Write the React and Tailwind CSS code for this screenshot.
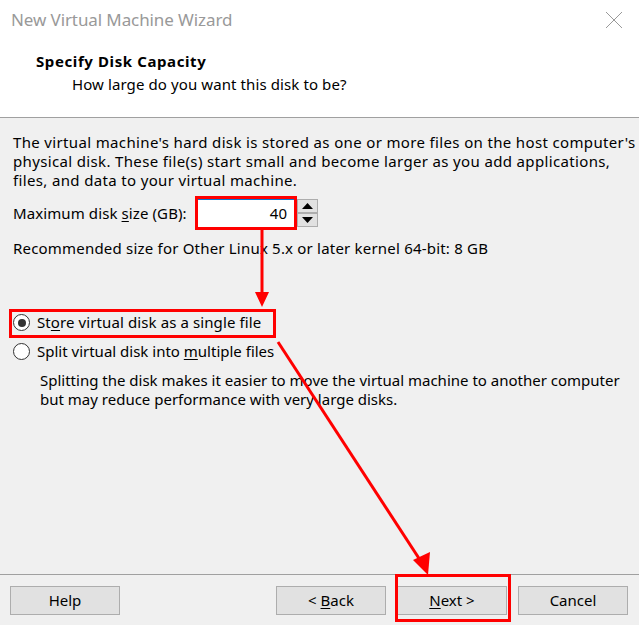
import React from 'react';

const Underline = ({ children }) => <span className="underline underline-offset-2">{children}</span>;

const Radio = ({ checked }) => (
  <span className="w-[17px] h-[17px] rounded-full border border-[#333] bg-white flex items-center justify-center shrink-0">
    {checked && <span className="w-[8px] h-[8px] rounded-full bg-[#333]" />}
  </span>
);

const Button = ({ children }) => (
  <button className="w-[110px] h-[29px] bg-[#e1e1e1] border border-[#adadad] text-[15px] text-black">
    {children}
  </button>
);

const Spin = ({ up }) => (
  <div className="w-[21px] h-[14px] bg-[#e1e1e1] border border-[#adadad] flex items-center justify-center">
    <svg width="11" height="6" viewBox="0 0 11 6">
      {up ? <polygon points="0,6 11,6 5.5,0" fill="#000" /> : <polygon points="0,0 11,0 5.5,6" fill="#000" />}
    </svg>
  </div>
);

export default function App() {
  return (
    <div className="w-[639px] h-[625px] bg-[#f0f0f0] relative flex flex-col overflow-hidden text-black" style={{ fontFamily: '"Noto Sans", "Open Sans", sans-serif' }}>
      {/* title + header */}
      <div className="h-[118px] bg-white border-b border-[#a0a0a0] shrink-0">
        <div className="h-[40px] flex items-center justify-between pl-[11px] pr-[16px]">
          <span className="text-[17px] text-[#999] tracking-[-0.1px]">New Virtual Machine Wizard</span>
          <svg width="18" height="18" viewBox="0 0 18 18">
            <path d="M1 1 L17 17 M17 1 L1 17" stroke="#999" strokeWidth="1" />
          </svg>
        </div>
        <div className="pl-[36px] pt-[10px] leading-[22px]">
          <div className="text-[15px] font-bold tracking-[0.6px]">Specify Disk Capacity</div>
          <div className="text-[15px] pl-[36px] pt-[1px] tracking-[0.1px]">How large do you want this disk to be?</div>
        </div>
      </div>

      {/* body */}
      <div className="flex-1 px-[13px] pt-[15px] text-[15px] leading-[19px]">
        <p className="tracking-[0.35px] whitespace-nowrap">
          The virtual machine's hard disk is stored as one or more files on the host computer's
          <br />
          physical disk. These file(s) start small and become larger as you add applications,
          <br />
          files, and data to your virtual machine.
        </p>
        <div className="flex items-center mt-[8px] h-[30px]">
          <span className="w-[184px] tracking-[0.1px]">Maximum disk <Underline>s</Underline>ize (GB):</span>
          <div className="w-[99px] h-[29px] bg-white border border-[#0078d7] flex items-center justify-end pr-[8px]">40</div>
          <div className="flex flex-col ml-[1px]">
            <Spin up />
            <Spin />
          </div>
        </div>
        <p className="mt-[11px] tracking-[0.2px]">Recommended size for Other Linux 5.x or later kernel 64-bit: 8 GB</p>

        <div className="mt-[55px] flex flex-col gap-[10px]">
          <label className="flex items-center gap-[7px] h-[19px]">
            <Radio checked />
            <span className="tracking-[0.1px]">St<Underline>o</Underline>re virtual disk as a single file</span>
          </label>
          <label className="flex items-center gap-[7px] h-[19px]">
            <Radio />
            <span>Split virtual disk into <Underline>m</Underline>ultiple files</span>
          </label>
        </div>
        <p className="pl-[27px] mt-[10px]">
          Splitting the disk makes it easier to move the virtual machine to another computer
          <br />
          but may reduce performance with very large disks.
        </p>
      </div>

      {/* footer */}
      <div className="h-[51px] border-t border-[#a0a0a0] shrink-0 flex items-start pt-[11px] px-[10px]">
        <Button>Help</Button>
        <div className="ml-auto flex gap-[11px] pr-[1px]">
          <Button>&lt; <Underline>B</Underline>ack</Button>
          <Button><Underline>N</Underline>ext &gt;</Button>
          <Button>Cancel</Button>
        </div>
      </div>

      {/* annotation overlay */}
      <svg className="absolute inset-0 pointer-events-none" width="639" height="625" viewBox="0 0 639 625">
        <g fill="none" stroke="#ff0000" strokeWidth="3">
          <rect x="196.5" y="197.5" width="99" height="31" />
          <rect x="10.5" y="310.5" width="264" height="26" />
          <rect x="396.5" y="575.5" width="113" height="45" />
          <line x1="262" y1="229" x2="262" y2="296" />
          <line x1="278" y1="342" x2="422" y2="563" />
        </g>
        <g fill="#ff0000">
          <polygon points="255,292 269,292 262,307" />
          <polygon points="413,560 430,552 428,575" />
        </g>
      </svg>
    </div>
  );
}
